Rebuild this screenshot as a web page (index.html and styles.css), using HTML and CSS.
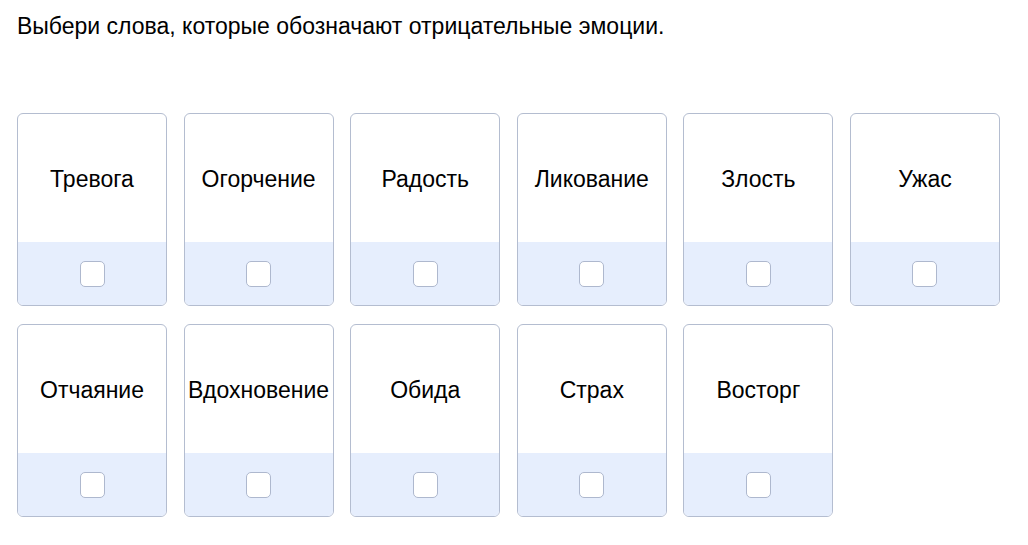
FILE: index.html
```html
<!DOCTYPE html>
<html lang="ru">
<head>
<meta charset="utf-8">
<link rel="stylesheet" href="styles.css">
</head>
<body>
<div class="task">
  <p class="question">Выбери слова, которые обозначают отрицательные эмоции.</p>
  <div class="grid">
    <div class="card"><div class="word">Тревога</div><div class="pick"><span class="box"></span></div></div>
    <div class="card"><div class="word">Огорчение</div><div class="pick"><span class="box"></span></div></div>
    <div class="card"><div class="word">Радость</div><div class="pick"><span class="box"></span></div></div>
    <div class="card"><div class="word">Ликование</div><div class="pick"><span class="box"></span></div></div>
    <div class="card"><div class="word">Злость</div><div class="pick"><span class="box"></span></div></div>
    <div class="card"><div class="word">Ужас</div><div class="pick"><span class="box"></span></div></div>
    <div class="card"><div class="word">Отчаяние</div><div class="pick"><span class="box"></span></div></div>
    <div class="card"><div class="word">Вдохновение</div><div class="pick"><span class="box"></span></div></div>
    <div class="card"><div class="word">Обида</div><div class="pick"><span class="box"></span></div></div>
    <div class="card"><div class="word">Страх</div><div class="pick"><span class="box"></span></div></div>
    <div class="card"><div class="word">Восторг</div><div class="pick"><span class="box"></span></div></div>
  </div>
</div>
</body>
</html>
```
FILE: styles.css
```css
* { box-sizing: border-box; }
body {
  margin: 0;
  background: #ffffff;
  font-family: "Liberation Sans", Arial, sans-serif;
  color: #000;
}
.task {
  padding: 13px 0 0 17px;
}
.question {
  margin: 0;
  font-size: 23px;
  line-height: 26px;
}
.grid {
  margin-top: 74px;
  display: grid;
  grid-template-columns: repeat(6, 150px);
  column-gap: 16.6px;
  row-gap: 18px;
}
.card {
  height: 193px;
  border: 1.5px solid #b4bdd0;
  border-radius: 6px;
  overflow: hidden;
  display: flex;
  flex-direction: column;
}
.word {
  height: 128px;
  padding-top: 2px;
  display: flex;
  align-items: center;
  justify-content: center;
  font-size: 23px;
  white-space: nowrap;
}
.pick {
  flex: 1;
  background: #e6eefd;
  display: flex;
  align-items: center;
  justify-content: center;
  padding-top: 1px;
}
.box {
  width: 25px;
  height: 26px;
  background: #fff;
  border: 1.5px solid #aeb8ce;
  border-radius: 5px;
}
```
